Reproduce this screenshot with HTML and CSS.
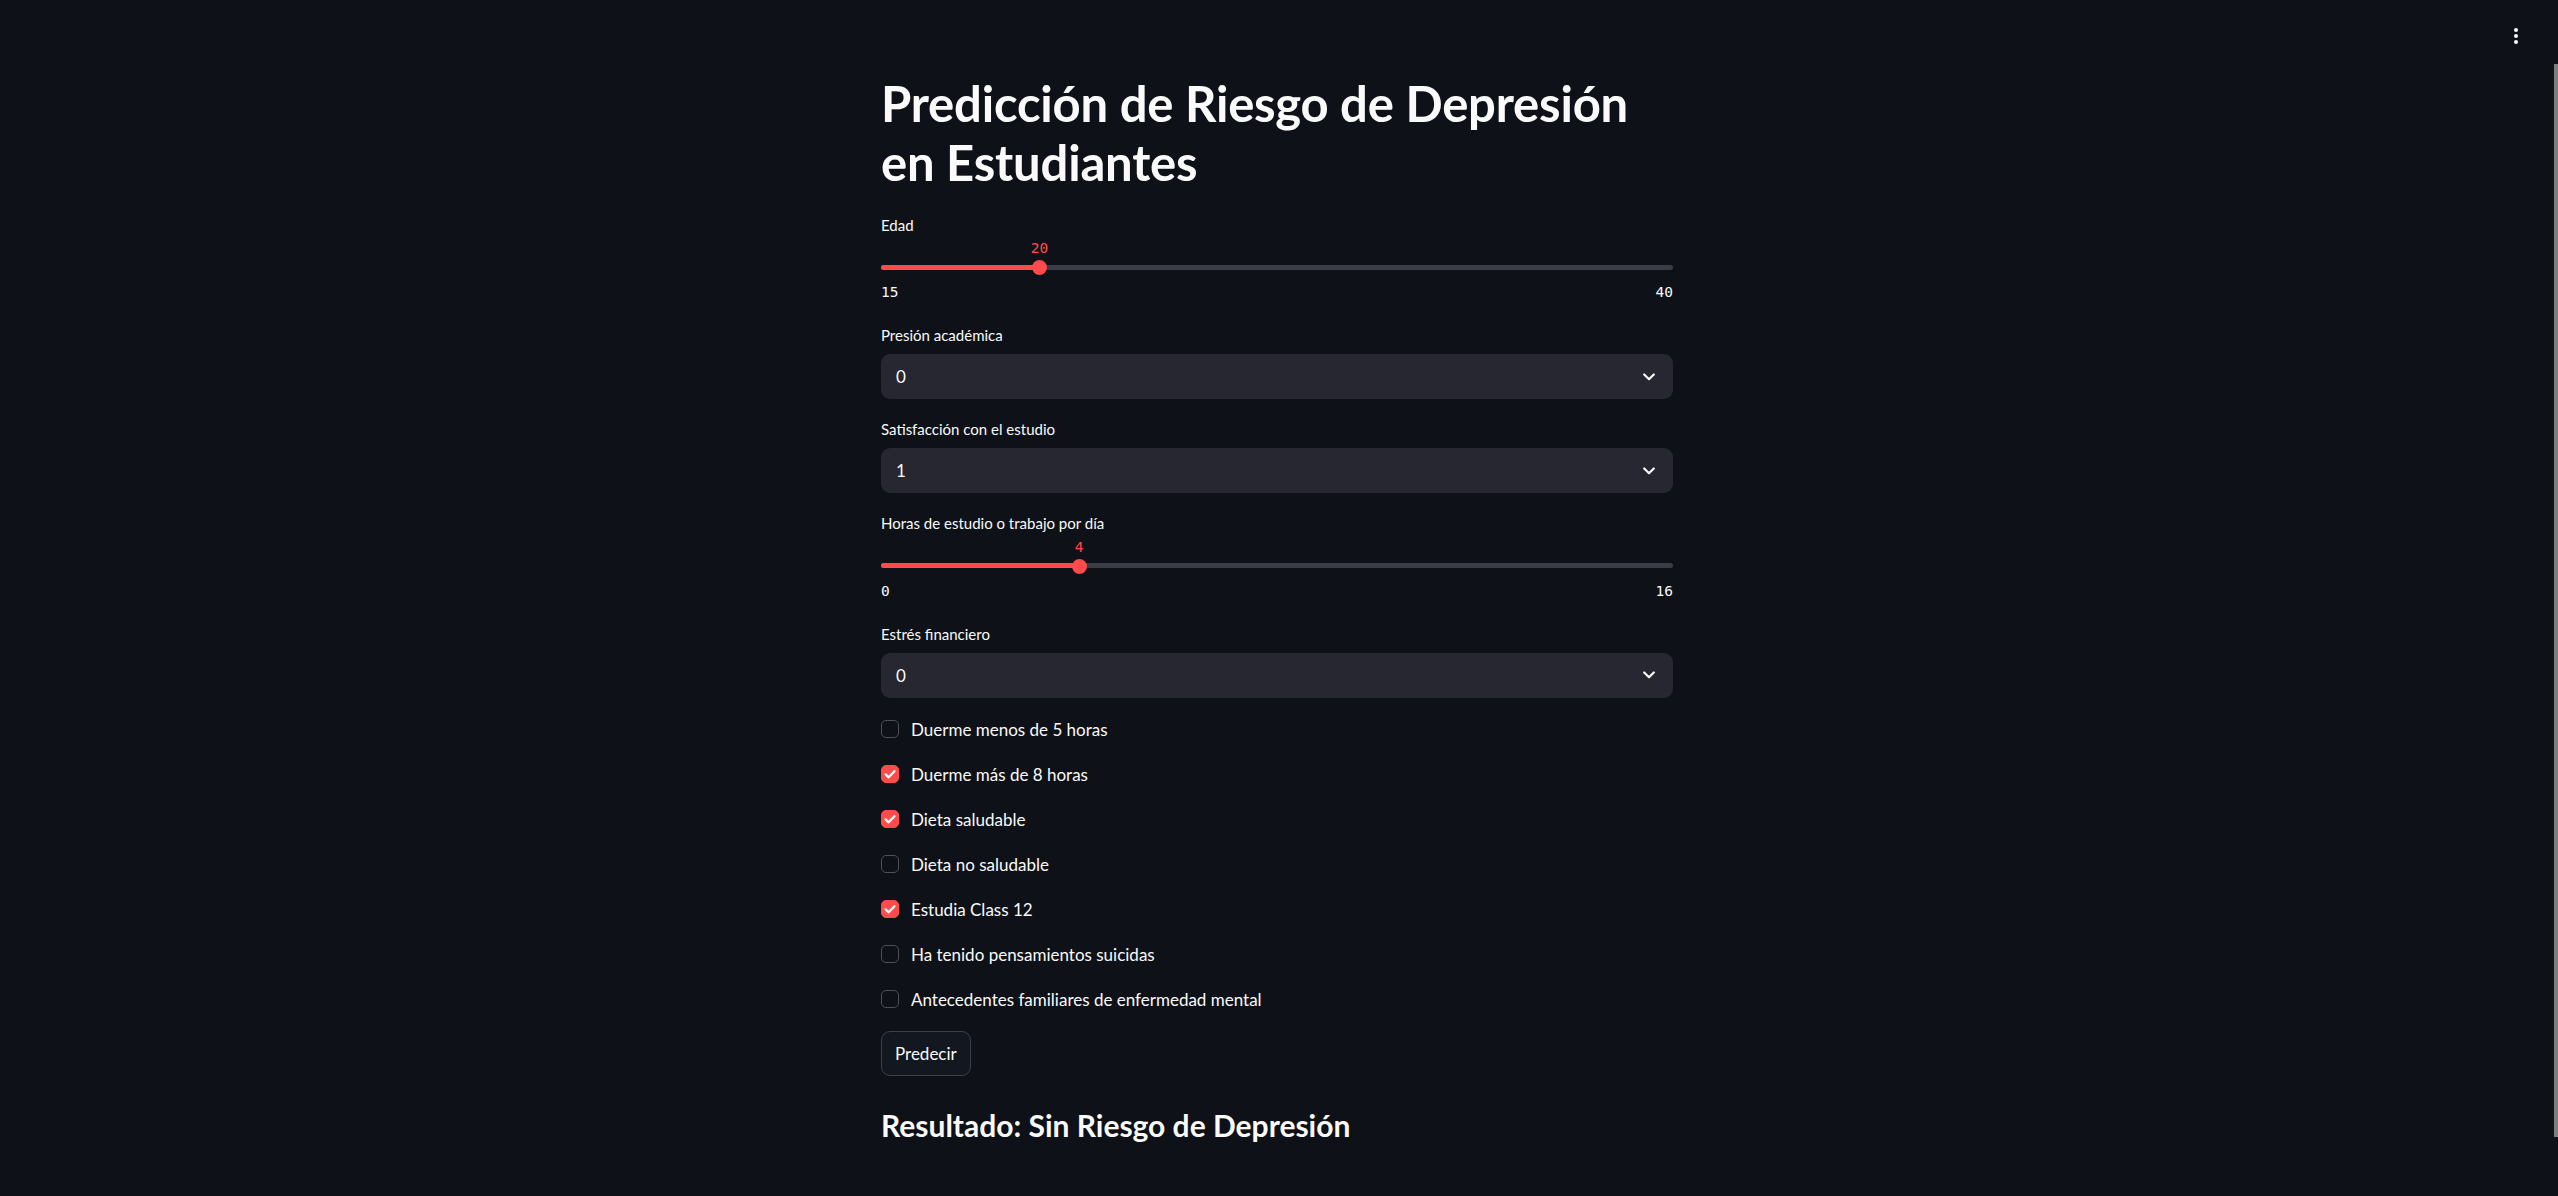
FILE: index.html
```html
<!DOCTYPE html>
<html lang="es">
<head>
<meta charset="utf-8">
<title>Predicción de Riesgo de Depresión en Estudiantes</title>
<link rel="stylesheet" href="styles.css">
</head>
<body>
<div class="app">
  <header class="topbar">
    <button class="menu-btn" aria-label="Menú">
      <svg width="6" height="18" viewBox="0 0 6 18"><circle cx="3" cy="3" r="2" fill="#fafafa"/><circle cx="3" cy="9" r="2" fill="#fafafa"/><circle cx="3" cy="15" r="2" fill="#fafafa"/></svg>
    </button>
  </header>
  <div class="scroll-thumb"></div>

  <main class="block">
    <h1 class="title">Predicción de Riesgo de Depresión<br>en Estudiantes</h1>

    <div class="widget slider">
      <div class="wlabel">Edad</div>
      <div class="slider-body">
        <div class="value-row"><span class="thumb-value" style="left:20%">20</span></div>
        <div class="track-row">
          <div class="track"><div class="fill" style="width:20%"></div></div>
          <div class="thumb" style="left:20%"></div>
        </div>
        <div class="minmax"><span>15</span><span>40</span></div>
      </div>
    </div>

    <div class="widget">
      <div class="wlabel">Presión académica</div>
      <div class="select"><span class="select-value">0</span><svg class="chev" width="12" height="8" viewBox="0 0 12 8"><polyline points="1.2,1.5 6,6.2 10.8,1.5" fill="none" stroke="#fafafa" stroke-width="2.2" stroke-linecap="round" stroke-linejoin="round"/></svg></div>
    </div>

    <div class="widget">
      <div class="wlabel">Satisfacción con el estudio</div>
      <div class="select"><span class="select-value">1</span><svg class="chev" width="12" height="8" viewBox="0 0 12 8"><polyline points="1.2,1.5 6,6.2 10.8,1.5" fill="none" stroke="#fafafa" stroke-width="2.2" stroke-linecap="round" stroke-linejoin="round"/></svg></div>
    </div>

    <div class="widget slider">
      <div class="wlabel">Horas de estudio o trabajo por día</div>
      <div class="slider-body">
        <div class="value-row"><span class="thumb-value" style="left:25%">4</span></div>
        <div class="track-row">
          <div class="track"><div class="fill" style="width:25%"></div></div>
          <div class="thumb" style="left:25%"></div>
        </div>
        <div class="minmax"><span>0</span><span>16</span></div>
      </div>
    </div>

    <div class="widget">
      <div class="wlabel">Estrés financiero</div>
      <div class="select"><span class="select-value">0</span><svg class="chev" width="12" height="8" viewBox="0 0 12 8"><polyline points="1.2,1.5 6,6.2 10.8,1.5" fill="none" stroke="#fafafa" stroke-width="2.2" stroke-linecap="round" stroke-linejoin="round"/></svg></div>
    </div>

    <label class="check"><span class="box"></span><span class="check-text">Duerme menos de 5 horas</span></label>
    <label class="check"><span class="box checked"><svg width="18" height="18" viewBox="0 0 18 18"><polyline points="4.6,9.4 7.6,12.3 13.4,6.2" fill="none" stroke="#fff" stroke-width="2.3" stroke-linecap="round" stroke-linejoin="round"/></svg></span><span class="check-text">Duerme más de 8 horas</span></label>
    <label class="check"><span class="box checked"><svg width="18" height="18" viewBox="0 0 18 18"><polyline points="4.6,9.4 7.6,12.3 13.4,6.2" fill="none" stroke="#fff" stroke-width="2.3" stroke-linecap="round" stroke-linejoin="round"/></svg></span><span class="check-text">Dieta saludable</span></label>
    <label class="check"><span class="box"></span><span class="check-text">Dieta no saludable</span></label>
    <label class="check"><span class="box checked"><svg width="18" height="18" viewBox="0 0 18 18"><polyline points="4.6,9.4 7.6,12.3 13.4,6.2" fill="none" stroke="#fff" stroke-width="2.3" stroke-linecap="round" stroke-linejoin="round"/></svg></span><span class="check-text">Estudia Class 12</span></label>
    <label class="check"><span class="box"></span><span class="check-text">Ha tenido pensamientos suicidas</span></label>
    <label class="check"><span class="box"></span><span class="check-text">Antecedentes familiares de enfermedad mental</span></label>

    <div class="btn-row"><button class="btn">Predecir</button></div>

    <h3 class="result">Resultado: Sin Riesgo de Depresión</h3>
  </main>
</div>
</body>
</html>
```
FILE: styles.css
```css
html, body {
  margin: 0;
  padding: 0;
  background: #0e1117;
  height: 100%;
  overflow: hidden;
}

body {
  font-family: Lato, "Noto Sans", sans-serif;
  color: #fafafa;
}

.app {
  position: relative;
  min-height: 1196px;
  padding-right: 4px;
}

.topbar {
  position: absolute;
  top: 0;
  left: 0;
  right: 4px;
  height: 60px;
  display: flex;
  justify-content: flex-end;
  align-items: flex-start;
  padding: 27px 35px 0 0;
  box-sizing: border-box;
}

.menu-btn {
  background: none;
  border: 0;
  padding: 0;
  width: 6px;
  height: 18px;
  display: flex;
}

.scroll-thumb {
  position: absolute;
  right: 0;
  top: 64px;
  width: 4px;
  height: 1073px;
  background: #7d7e82;
}

.block {
  width: 792px;
  margin: 0 auto;
  padding-top: 74px;
  display: flex;
  flex-direction: column;
  gap: 18px;
}

.title {
  margin: 0 0 3px;
  font-size: 49px;
  line-height: 59px;
  font-weight: 700;
  letter-spacing: -0.2px;
}

.wlabel {
  height: 24px;
  line-height: 24px;
  font-size: 15px;
}

.widget .wlabel {
  margin-bottom: 7px;
}

.slider .wlabel {
  margin-bottom: -0.75px;
}

.slider-body {
  height: 69px;
}

.value-row {
  position: relative;
  height: 24px;
}

.thumb-value {
  position: absolute;
  top: 0;
  transform: translateX(-50%);
  font-family: "DejaVu Sans Mono", "Liberation Mono", monospace;
  font-size: 14.5px;
  line-height: 24px;
  color: #ff4b4b;
}

.track-row {
  position: relative;
  height: 14px;
  display: flex;
  align-items: center;
}

.track {
  width: 100%;
  height: 5px;
  border-radius: 3px;
  background: #3a3d46;
  overflow: hidden;
}

.fill {
  height: 100%;
  background: #ff4b4b;
}

.thumb {
  position: absolute;
  top: 0;
  width: 15px;
  height: 15px;
  margin-left: -7.5px;
  border-radius: 50%;
  background: #ff4b4b;
}

.minmax {
  margin-top: 6px;
  display: flex;
  justify-content: space-between;
  font-family: "DejaVu Sans Mono", "Liberation Mono", monospace;
  font-size: 14.5px;
  line-height: 24px;
  color: #fafafa;
}

.select {
  height: 45px;
  border-radius: 9px;
  background: #262730;
  display: flex;
  align-items: center;
  justify-content: space-between;
  padding: 0 18px 0 15px;
}

.select-value {
  font-size: 17px;
}

.chev {
  display: block;
}

.check {
  height: 27px;
  display: flex;
  align-items: center;
  gap: 12px;
  font-size: 17px;
  line-height: 27px;
}

.box {
  width: 18px;
  height: 18px;
  box-sizing: border-box;
  border: 1px solid #4d5058;
  border-radius: 5px;
  flex: none;
  display: flex;
}

.box.checked {
  background: #ff4b4b;
  border-color: #ff4b4b;
}

.box.checked svg {
  margin: -1px;
}

.btn-row {
  display: flex;
}

.btn {
  height: 45px;
  padding: 0 13px;
  border: 1px solid #3d4046;
  border-radius: 9px;
  background: rgb(19, 23, 32);
  color: #fafafa;
  font-family: Lato, "Noto Sans", sans-serif;
  font-size: 17px;
}

.result {
  margin: 0;
  padding-top: 13px;
  font-size: 30px;
  line-height: 36px;
  font-weight: 700;
}
```
